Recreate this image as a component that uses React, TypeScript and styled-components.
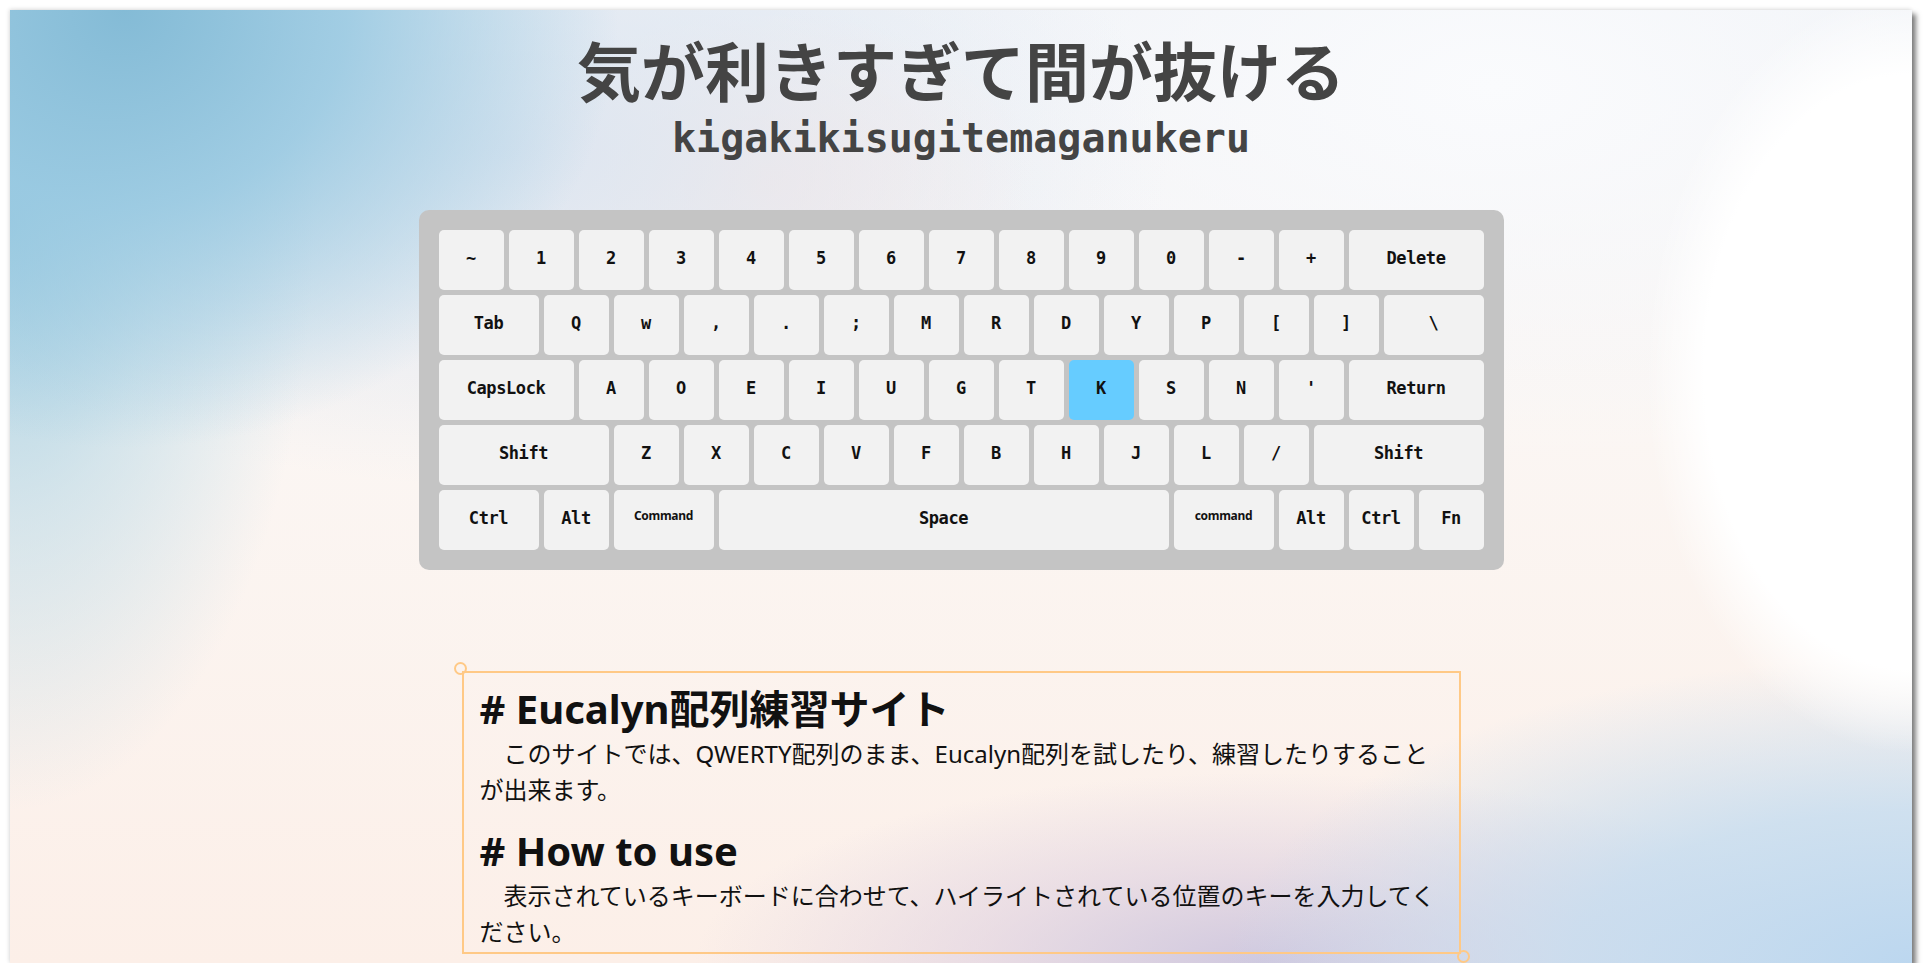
import React from 'react'
import styled, {createGlobalStyle} from 'styled-components'


const GlobalStyle = createGlobalStyle`
  html, body {
    margin: 0;
    padding: 0;
    background: #ffffff;
  }
  body {
    font-family: "Noto Sans", "Noto Sans CJK JP", sans-serif;
  }
`

type KeyDef = {
    label: string
    u?: number
    small?: boolean
}

const rows: KeyDef[][] = [
    [
        {label: '~'}, {label: '1'}, {label: '2'}, {label: '3'}, {label: '4'}, {label: '5'},
        {label: '6'}, {label: '7'}, {label: '8'}, {label: '9'}, {label: '0'}, {label: '-'},
        {label: '+'}, {label: 'Delete', u: 2},
    ],
    [
        {label: 'Tab', u: 1.5}, {label: 'Q'}, {label: 'w'}, {label: ','}, {label: '.'}, {label: ';'},
        {label: 'M'}, {label: 'R'}, {label: 'D'}, {label: 'Y'}, {label: 'P'}, {label: '['},
        {label: ']'}, {label: '\\', u: 1.5},
    ],
    [
        {label: 'CapsLock', u: 2}, {label: 'A'}, {label: 'O'}, {label: 'E'}, {label: 'I'}, {label: 'U'},
        {label: 'G'}, {label: 'T'}, {label: 'K'}, {label: 'S'}, {label: 'N'}, {label: "'"},
        {label: 'Return', u: 2},
    ],
    [
        {label: 'Shift', u: 2.5}, {label: 'Z'}, {label: 'X'}, {label: 'C'}, {label: 'V'}, {label: 'F'},
        {label: 'B'}, {label: 'H'}, {label: 'J'}, {label: 'L'}, {label: '/'}, {label: 'Shift', u: 2.5},
    ],
    [
        {label: 'Ctrl', u: 1.5}, {label: 'Alt'}, {label: 'Command', u: 1.5, small: true},
        {label: 'Space', u: 6.5}, {label: 'command', u: 1.5, small: true},
        {label: 'Alt'}, {label: 'Ctrl'}, {label: 'Fn'},
    ],
]

// the key the user has to type next
const highlighted = 'K'


const App = () => {
    return <>
        <GlobalStyle/>
        <Frame>
            <Title>気が利きすぎて間が抜ける</Title>
            <Reading>kigakikisugitemaganukeru</Reading>

            <Keyboard>
                { rows.map((row, ri) => <KeyRow key={ri}>
                    { row.map((k, ki) => <Key
                        key={ki}
                        $u={k.u ?? 1}
                        $active={k.label === highlighted}
                        $small={!!k.small}
                    >{k.label}</Key>) }
                </KeyRow>) }
            </Keyboard>

            <Note>
                <NoteTitle># Eucalyn配列練習サイト</NoteTitle>
                <NoteText>　このサイトでは、QWERTY配列のまま、Eucalyn配列を試したり、練習したりすることが出来ます。</NoteText>
                <NoteTitle $next># How to use</NoteTitle>
                <NoteText>　表示されているキーボードに合わせて、ハイライトされている位置のキーを入力してください。</NoteText>
            </Note>
        </Frame>
    </>
}
export default App


const Frame = styled.div`
  margin: 10px 0 0 10px;
  width: 1902px;
  height: 953px;
  overflow: hidden;
  box-sizing: border-box;
  padding-top: 20px;
  display: flex;
  flex-direction: column;
  align-items: center;
  box-shadow: 4px 4px 5px rgba(0, 0, 0, 0.5), -1px -1px 4px rgba(0, 0, 0, 0.12);
  background:
    radial-gradient(ellipse 14% 40% at 100% 38%, #ffffff 0%, #ffffff 78%, rgba(255,255,255,0) 100%),
    radial-gradient(ellipse 36% 32% at 100% 100%, #bcd7ef 0%, rgba(196,220,240,0.8) 50%, rgba(200,220,240,0) 100%),
    radial-gradient(ellipse 30% 20% at 66% 100%, rgba(205,198,222,0.95) 0%, rgba(218,205,224,0.55) 50%, rgba(230,210,220,0) 100%),
    radial-gradient(ellipse 26% 46% at 6% 0%, #84bbd6 0%, rgba(150,200,225,0.85) 45%, rgba(170,210,230,0) 100%),
    radial-gradient(ellipse 16% 62% at 0% 22%, rgba(150,200,222,0.85) 0%, rgba(175,212,228,0.5) 50%, rgba(190,215,230,0) 100%),
    radial-gradient(ellipse 35% 35% at 26% 15%, rgba(218,228,240,0.9) 0%, rgba(225,232,242,0) 100%),
    radial-gradient(ellipse 14% 18% at 40% 18%, rgba(253,236,232,0.9) 0%, rgba(253,236,232,0) 100%),
    radial-gradient(ellipse 40% 40% at 78% 8%, rgba(250,251,253,1) 0%, rgba(250,251,253,0) 100%),
    linear-gradient(180deg, #eef1f6 0%, #fbf6f3 45%, #fcefe8 100%);
`

const Title = styled.h1`
  margin: 0;
  font-family: "Noto Sans CJK JP", sans-serif;
  font-size: 64px;
  font-weight: 700;
  line-height: 1.2;
  color: #444444;
`

const Reading = styled.div`
  margin-top: 7px;
  font-family: "DejaVu Sans Mono", monospace;
  font-size: 40px;
  font-weight: 700;
  line-height: 1.2;
  color: #444444;
`

const Keyboard = styled.div`
  margin-top: 48px;
  padding: 20px;
  display: flex;
  flex-direction: column;
  gap: 5px;
  background: #c4c4c4;
  border-radius: 10px;
`

const KeyRow = styled.div`
  display: flex;
  gap: 5px;
`

const Key = styled.div<{$u: number, $active: boolean, $small: boolean}>`
  width: ${p => p.$u * 70 - 5}px;
  height: 60px;
  display: flex;
  align-items: center;
  justify-content: center;
  padding-bottom: ${p => p.$small ? 8 : 3}px;
  box-sizing: border-box;
  border-radius: 5px;
  background: ${p => p.$active ? '#66ccff' : '#f2f2f2'};
  font-family: ${p => p.$small ? '"Noto Sans", sans-serif' : '"DejaVu Sans Mono", monospace'};
  font-size: ${p => p.$small ? 12 : 17}px;
  font-weight: 700;
  color: #111111;
  letter-spacing: ${p => p.$small ? '-0.3px' : '-0.4px'};
`

const Note = styled.div`
  position: relative;
  margin-top: 101px;
  width: 999px;
  box-sizing: border-box;
  padding: 9px 16px 2px;
  border: 2px solid #ffc986;
  color: #111111;

  &::before, &::after {
    content: '';
    position: absolute;
    width: 9px;
    height: 9px;
    border: 2px solid #ffc986;
    border-radius: 50%;
  }
  &::before {
    left: -10px;
    top: -11px;
  }
  &::after {
    right: -11px;
    bottom: -11px;
  }
`

const NoteTitle = styled.h2<{$next?: boolean}>`
  margin: ${p => p.$next ? 16 : 0}px 0 0;
  font-family: "Noto Sans", "Noto Sans CJK JP", sans-serif;
  font-size: 40px;
  font-weight: 700;
  line-height: 54px;
`

const NoteText = styled.p`
  margin: 0;
  font-family: "Noto Sans", "Noto Sans CJK JP", sans-serif;
  font-size: 24px;
  line-height: 1.5;
`
